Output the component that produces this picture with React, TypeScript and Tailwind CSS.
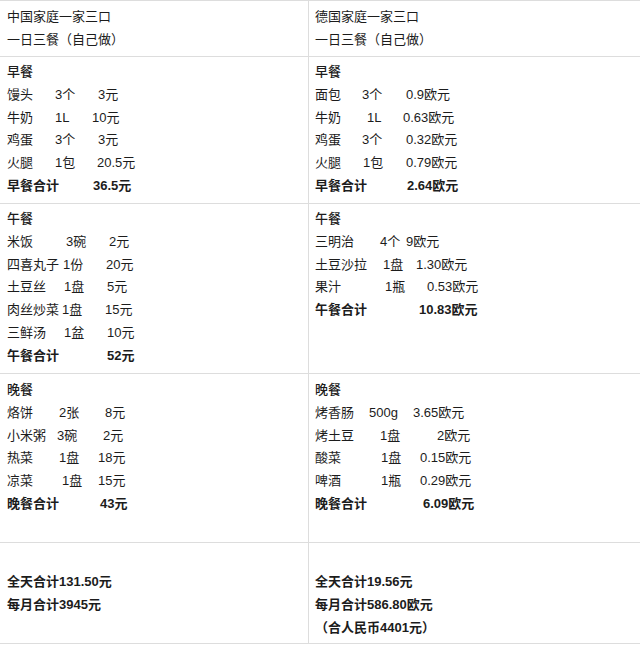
import React from "react";

type Item = { n: string; q: string; p: string; w1: string; w2: string };

const L_BREAKFAST: Item[] = [
  { n: "馒头", q: "3个", p: "3元", w1: "w-[48px]", w2: "w-[43px]" },
  { n: "牛奶", q: "1L", p: "10元", w1: "w-[48px]", w2: "w-[37px]" },
  { n: "鸡蛋", q: "3个", p: "3元", w1: "w-[48px]", w2: "w-[43px]" },
  { n: "火腿", q: "1包", p: "20.5元", w1: "w-[48px]", w2: "w-[42px]" },
];
const L_LUNCH: Item[] = [
  { n: "米饭", q: "3碗", p: "2元", w1: "w-[59px]", w2: "w-[43px]" },
  { n: "四喜丸子", q: "1份", p: "20元", w1: "w-[56px]", w2: "w-[43px]" },
  { n: "土豆丝", q: "1盘", p: "5元", w1: "w-[57px]", w2: "w-[43px]" },
  { n: "肉丝炒菜", q: "1盘", p: "15元", w1: "w-[55px]", w2: "w-[43px]" },
  { n: "三鲜汤", q: "1盆", p: "10元", w1: "w-[57px]", w2: "w-[43px]" },
];
const L_DINNER: Item[] = [
  { n: "烙饼", q: "2张", p: "8元", w1: "w-[52px]", w2: "w-[46px]" },
  { n: "小米粥", q: "3碗", p: "2元", w1: "w-[50px]", w2: "w-[46px]" },
  { n: "热菜", q: "1盘", p: "18元", w1: "w-[52px]", w2: "w-[39px]" },
  { n: "凉菜", q: "1盘", p: "15元", w1: "w-[55px]", w2: "w-[36px]" },
];
const R_BREAKFAST: Item[] = [
  { n: "面包", q: "3个", p: "0.9欧元", w1: "w-[47px]", w2: "w-[44px]" },
  { n: "牛奶", q: "1L", p: "0.63欧元", w1: "w-[52px]", w2: "w-[36px]" },
  { n: "鸡蛋", q: "3个", p: "0.32欧元", w1: "w-[47px]", w2: "w-[44px]" },
  { n: "火腿", q: "1包", p: "0.79欧元", w1: "w-[48px]", w2: "w-[43px]" },
];
const R_LUNCH: Item[] = [
  { n: "三明治", q: "4个", p: "9欧元", w1: "w-[65px]", w2: "w-[26px]" },
  { n: "土豆沙拉", q: "1盘", p: "1.30欧元", w1: "w-[68px]", w2: "w-[33px]" },
  { n: "果汁", q: "1瓶", p: "0.53欧元", w1: "w-[70px]", w2: "w-[42px]" },
];
const R_DINNER: Item[] = [
  { n: "烤香肠", q: "500g", p: "3.65欧元", w1: "w-[54px]", w2: "w-[44px]" },
  { n: "烤土豆", q: "1盘", p: "2欧元", w1: "w-[65px]", w2: "w-[57px]" },
  { n: "酸菜", q: "1盘", p: "0.15欧元", w1: "w-[66px]", w2: "w-[39px]" },
  { n: "啤酒", q: "1瓶", p: "0.29欧元", w1: "w-[66px]", w2: "w-[39px]" },
];

function Rows({ items }: { items: Item[] }) {
  return (
    <>
      {items.map((it, i) => (
        <div key={i} className="flex whitespace-nowrap">
          <span className={`${it.w1} shrink-0`}>{it.n}</span>
          <span className={`${it.w2} shrink-0`}>{it.q}</span>
          <span>{it.p}</span>
        </div>
      ))}
    </>
  );
}

function Section({
  title,
  items,
  total,
  totalLabel,
  tw,
}: {
  title: string;
  items: Item[];
  total: string;
  totalLabel: string;
  tw: string;
}) {
  return (
    <>
      <div className="font-medium">{title}</div>
      <Rows items={items} />
      <div className="flex whitespace-nowrap font-bold">
        <span className={`${tw} shrink-0`}>{totalLabel}</span>
        <span>{total}</span>
      </div>
    </>
  );
}

export default function App() {
  return (
    <div
      className="w-[640px] h-[645px] bg-white text-[13px] leading-[22.8px] text-[#1c1c1c] overflow-hidden"
      style={{ fontFamily: '"Liberation Sans", "Noto Sans CJK SC", sans-serif' }}
    >
      <div className="flex flex-col border-t border-[#dddddd]">
        {/* header */}
        <div className="flex h-[56px] border-b border-[#dddddd]">
          <div className="w-[309px] shrink-0 border-r border-[#dddddd] pl-[7px] pt-[5px]">
            <div>中国家庭一家三口</div>
            <div>一日三餐（自己做）</div>
          </div>
          <div className="flex-1 pl-[6px] pt-[5px]">
            <div>德国家庭一家三口</div>
            <div>一日三餐（自己做）</div>
          </div>
        </div>
        {/* breakfast */}
        <div className="flex h-[147px] border-b border-[#dddddd]">
          <div className="w-[309px] shrink-0 border-r border-[#dddddd] pl-[7px] pt-[4px]">
            <Section title="早餐" items={L_BREAKFAST} totalLabel="早餐合计" total="36.5元" tw="w-[86px]" />
          </div>
          <div className="flex-1 pl-[6px] pt-[4px]">
            <Section title="早餐" items={R_BREAKFAST} totalLabel="早餐合计" total="2.64欧元" tw="w-[92px]" />
          </div>
        </div>
        {/* lunch */}
        <div className="flex h-[170px] border-b border-[#dddddd]">
          <div className="w-[309px] shrink-0 border-r border-[#dddddd] pl-[7px] pt-[4px]">
            <Section title="午餐" items={L_LUNCH} totalLabel="午餐合计" total="52元" tw="w-[100px]" />
          </div>
          <div className="flex-1 pl-[6px] pt-[4px]">
            <Section title="午餐" items={R_LUNCH} totalLabel="午餐合计" total="10.83欧元" tw="w-[104px]" />
          </div>
        </div>
        {/* dinner */}
        <div className="flex h-[169px] border-b border-[#dddddd]">
          <div className="w-[309px] shrink-0 border-r border-[#dddddd] pl-[7px] pt-[5px]">
            <Section title="晚餐" items={L_DINNER} totalLabel="晚餐合计" total="43元" tw="w-[93px]" />
          </div>
          <div className="flex-1 pl-[6px] pt-[5px]">
            <Section title="晚餐" items={R_DINNER} totalLabel="晚餐合计" total="6.09欧元" tw="w-[108px]" />
          </div>
        </div>
        {/* totals */}
        <div className="flex h-[101px] border-b border-[#dddddd] font-bold">
          <div className="w-[309px] shrink-0 border-r border-[#dddddd] pl-[7px] pt-[28px]">
            <div>全天合计131.50元</div>
            <div>每月合计3945元</div>
          </div>
          <div className="flex-1 pl-[6px] pt-[28px]">
            <div>全天合计19.56元</div>
            <div>每月合计586.80欧元</div>
            <div>（合人民币4401元）</div>
          </div>
        </div>
      </div>
    </div>
  );
}
